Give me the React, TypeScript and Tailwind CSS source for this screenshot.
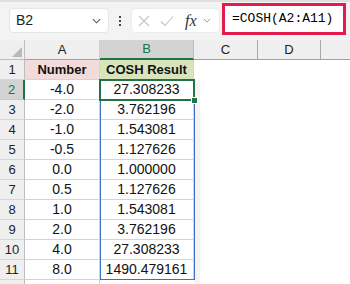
const ROWS = [
  { a: "-4.0", b: "27.308233" },
  { a: "-2.0", b: "3.762196" },
  { a: "-1.0", b: "1.543081" },
  { a: "-0.5", b: "1.127626" },
  { a: "0.0", b: "1.000000" },
  { a: "0.5", b: "1.127626" },
  { a: "1.0", b: "1.543081" },
  { a: "2.0", b: "3.762196" },
  { a: "4.0", b: "27.308233" },
  { a: "8.0", b: "1490.479161" },
];

function Chevron({ className = "" }: { className?: string }) {
  return (
    <svg viewBox="0 0 10 6" className={className} fill="none">
      <path d="M1 1 L5 5 L9 1" stroke="currentColor" strokeWidth="1.2" />
    </svg>
  );
}

/** Name box, fx buttons and the formula input, with the formula boxed in red. */
function FormulaBar() {
  return (
    <div className="h-[40px] bg-[#f3f3f3] border-t-2 border-[#e0e0e0] flex items-start">
      <div className="ml-[9px] mt-[6px] w-[100px] h-[25px] rounded-[4px] bg-white border border-[#e6e6e6] flex items-center justify-between pl-[6px] pr-[7px]">
        <span className="text-[14px] text-[#222]">B2</span>
        <Chevron className="w-[9px] h-[6px] text-[#555]" />
      </div>
      <div className="w-[22px] h-[29px] mt-[4px] flex flex-col items-center justify-center gap-[2px]">
        <span className="w-[2px] h-[2px] bg-[#444]" />
        <span className="w-[2px] h-[2px] bg-[#444]" />
        <span className="w-[2px] h-[2px] bg-[#444]" />
      </div>
      <div className="mt-[6px] w-[89px] h-[25px] rounded-[4px] bg-white border border-[#ececec] flex items-center pl-[6px]">
        <svg viewBox="0 0 12 12" className="w-[12px] h-[12px]" fill="none">
          <path d="M1 1 L11 11 M11 1 L1 11" stroke="#c4c4c4" strokeWidth="1.1" />
        </svg>
        <svg viewBox="0 0 14 12" className="ml-[10px] w-[14px] h-[12px]" fill="none">
          <path d="M1 6.5 L5 10.5 L13 1.5" stroke="#c4c4c4" strokeWidth="1.1" />
        </svg>
        <span className="ml-[11px] font-['Liberation_Serif'] italic text-[16px] text-[#333] leading-none">
          fx
        </span>
        <Chevron className="ml-[6px] w-[8px] h-[5px] text-[#999]" />
      </div>
      <div className="ml-[2px] mt-[1px] w-[124px] h-[32px] border-[3px] border-[#e31c4c] bg-white flex items-center pl-[7px]">
        <span className="font-['Liberation_Mono'] text-[13px] text-black">=COSH(A2:A11)</span>
      </div>
    </div>
  );
}

export default function App() {
  return (
    <div className="w-[350px] h-[284px] overflow-hidden bg-white font-['Liberation_Sans',sans-serif] text-[14px] text-[#111]">
      <FormulaBar />

      <div className="relative">
        {/* column headers */}
        <div className="flex h-[20px] bg-[#efefef] text-[13px] text-[#222]">
          <div className="relative w-[25px] border-r border-b border-[#bdbdbd]">
            <svg viewBox="0 0 10 10" className="absolute right-[2px] bottom-[2px] w-[10px] h-[10px]">
              <path d="M10 0 L10 10 L0 10 Z" fill="#b9b9b9" />
            </svg>
          </div>
          <div className="w-[75px] border-r border-[#cfcfcf] border-b border-b-[#a0a0a0] flex items-center justify-center">A</div>
          <div className="w-[94px] bg-[#d3d3d3] border-r border-[#bdbdbd] border-b-2 border-b-[#217346] text-[#217346] flex items-center justify-center">B</div>
          <div className="w-[64px] border-r border-[#a8a8a8] border-b border-b-[#a0a0a0] flex items-center justify-center">C</div>
          <div className="w-[63px] border-r border-[#a8a8a8] border-b border-b-[#a0a0a0] flex items-center justify-center">D</div>
          <div className="flex-1 border-b border-[#a0a0a0]" />
        </div>

        {/* row 1: headings */}
        <div className="flex h-[20px]">
          <div className="w-[25px] bg-[#efefef] border-r border-[#bdbdbd] border-b border-b-[#d6d6d6] flex items-center justify-center text-[13px] text-[#222]">1</div>
          <div className="w-[75px] bg-[#f2dcdb] border-r border-b border-[#d4d4d4] flex items-center justify-center font-bold text-[13px]">Number</div>
          <div className="w-[94px] bg-[#d8e4bc] border-r border-b border-[#d4d4d4] flex items-center justify-center font-bold text-[13px]">COSH Result</div>
          <div className="flex-1" />
        </div>

        {ROWS.map((r, i) => (
          <div key={i} className="flex h-[20px]">
            {i === 0 ? (
              <div className="w-[25px] bg-[#d3d3d3] border-r-2 border-[#217346] border-b border-b-[#c8c8c8] flex items-center justify-center text-[13px] text-[#217346]">2</div>
            ) : (
              <div className="w-[25px] bg-[#efefef] border-r border-[#bdbdbd] border-b border-b-[#d6d6d6] flex items-center justify-center text-[13px] text-[#222]">{i + 2}</div>
            )}
            <div className="w-[75px] border-r border-b border-[#d4d4d4] flex items-center justify-center">{r.a}</div>
            <div className="w-[94px] border-r border-b border-[#d4d4d4] flex items-center justify-center">{r.b}</div>
            <div className="w-[6px] bg-[#f4f4f4]" />
            <div className="flex-1" />
          </div>
        ))}

        <div className="flex h-[20px]">
          <div className="w-[25px] bg-[#efefef] border-r border-[#bdbdbd]" />
          <div className="w-[75px] border-r border-[#d4d4d4]" />
          <div className="w-[94px]" />
          <div className="w-[6px] bg-[#f4f4f4]" />
        </div>

        {/* referenced range outline */}
        <div className="absolute left-[100px] top-[40px] w-[95px] h-[200px] border border-[#3b6fc4] pointer-events-none" />
        {/* active cell B2 */}
        <div className="absolute left-[99px] top-[39px] w-[96px] h-[22px] border-2 border-[#217346] pointer-events-none" />
        <div className="absolute left-[191px] top-[57px] w-[7px] h-[7px] bg-[#217346] border border-white" />
      </div>
    </div>
  );
}
